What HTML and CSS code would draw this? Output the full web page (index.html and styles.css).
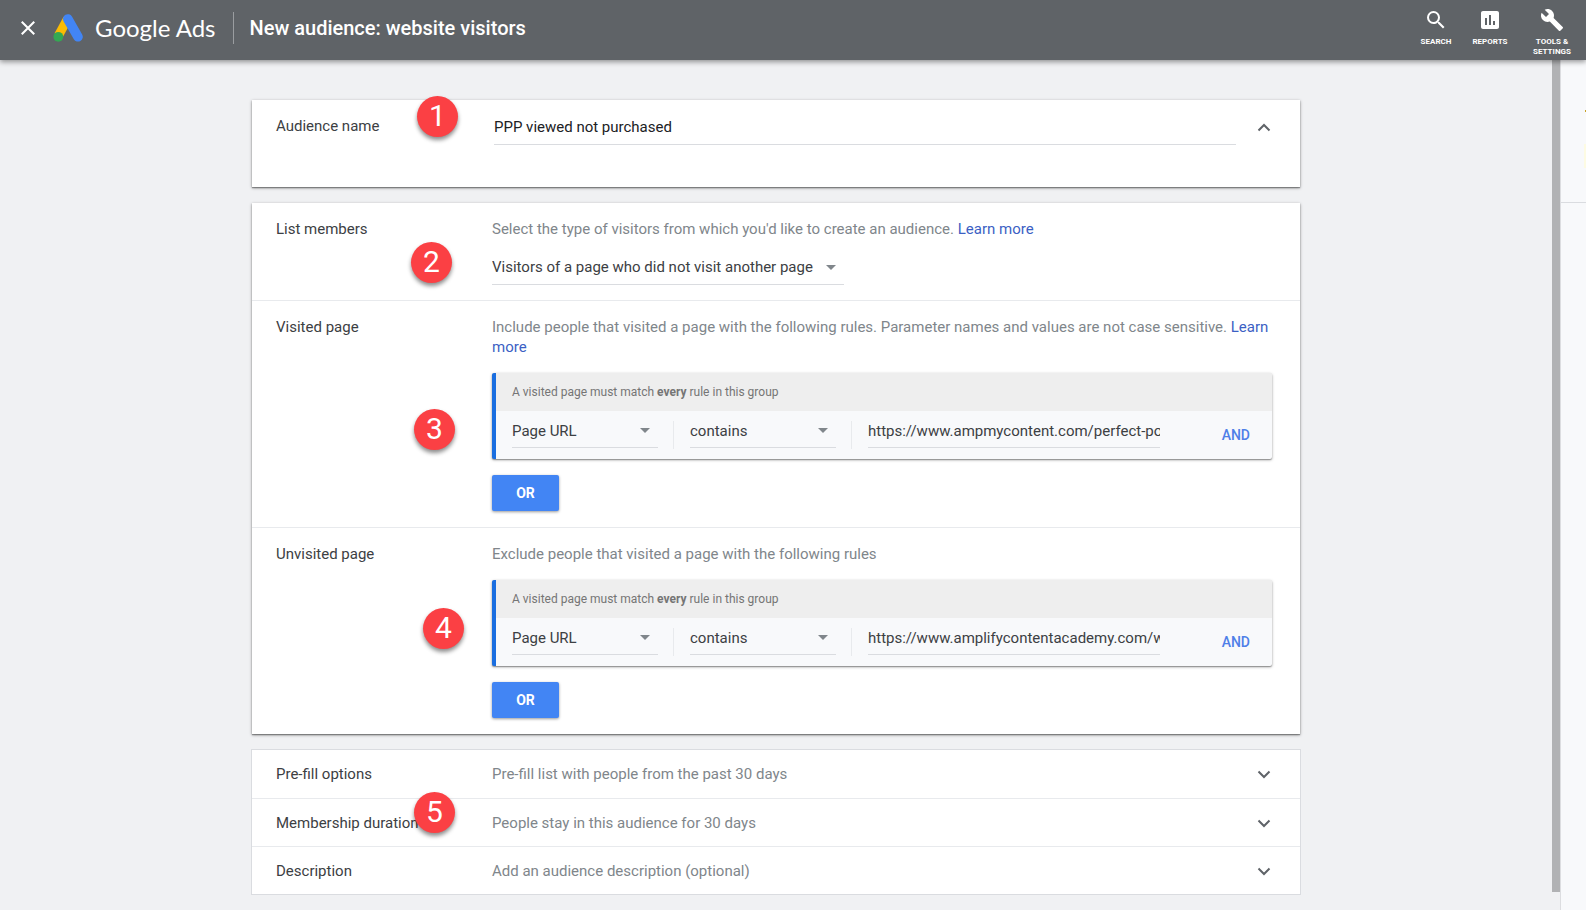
FILE: index.html
```html
<!DOCTYPE html>
<html lang="en">

<head>
    <meta charset="UTF-8">
    <meta name="viewport" content="width=device-width, initial-scale=1.0">
    <title>New audience: website visitors - Google Ads</title>
    <link rel="stylesheet" href="styles.css">
</head>

<body>

    <header class="topbar">
        <button class="close-button" aria-label="Close">
            <svg viewBox="0 0 24 24"><path d="M4.500 4.500L19.500 19.500M19.500 4.500L4.500 19.500" /></svg>
        </button>
        <svg class="logo" viewBox="0 0 30 28">
            <path d="M14.500 5L5.500 21.500" stroke="#fbbc04" stroke-width="9" />
            <path d="M14.800 5L25 22.800" stroke="#4285f4" stroke-width="9.600" stroke-linecap="round" />
            <circle cx="5.300" cy="22.800" r="4.900" fill="#34a853" />
        </svg>
        <span class="brand">Google Ads</span>
        <h1>New audience: website visitors</h1>

        <nav class="tools">
            <button class="tool">
                <svg viewBox="0 0 24 24"><path d="M15.500 14h-.79l-.28-.27A6.471 6.471 0 0 0 16 9.500 6.500 6.500 0 1 0 9.500 16c1.610 0 3.090-.59 4.230-1.570l.27.28v.79l5 4.990L20.490 19l-4.990-5zm-6 0C7.010 14 5 11.990 5 9.500S7.010 5 9.500 5 14 7.010 14 9.500 11.990 14 9.500 14z" /></svg>
                Search
            </button>
            <button class="tool">
                <svg viewBox="0 0 24 24"><path d="M19 3H5c-1.100 0-2 .9-2 2v14c0 1.100.9 2 2 2h14c1.100 0 2-.9 2-2V5c0-1.100-.9-2-2-2zM9 17H7v-7h2v7zm4 0h-2V7h2v10zm4 0h-2v-4h2v4z" /></svg>
                Reports
            </button>
            <button class="tool">
                <svg viewBox="0 0 24 24"><path d="M22.700 19l-9.100-9.100c.9-2.300.4-5-1.500-6.900-2-2-5-2.400-7.400-1.300L9 6 6 9 1.600 4.700C.4 7.100.9 10.100 2.900 12.100c1.900 1.900 4.600 2.400 6.900 1.500l9.100 9.100c.4.4 1 .4 1.400 0l2.300-2.300c.5-.4.5-1.100.1-1.400z" /></svg>
                Tools &amp; Settings
            </button>
        </nav>
    </header>

    <div class="layout">
        <main>
            <section class="card">
                <div class="row name-row">
                    <label for="audienceName">Audience name</label>
                    <div class="name-field">
                        <input type="text" id="audienceName" value="PPP viewed not purchased">
                        <button class="toggle" aria-label="Collapse">
                            <svg viewBox="0 0 24 24"><path d="M6.500 14.500L12 9L17.500 14.500" /></svg>
                        </button>
                    </div>
                    <span class="badge badge-1">1</span>
                </div>
            </section>

            <section class="card">
                <div class="row">
                    <label for="listMembers">List members</label>
                    <div class="content">
                        <p>Select the type of visitors from which you'd like to create an audience. <a href="#">Learn more</a></p>
                        <div class="select members-select">
                            <select id="listMembers">
                                <option>Visitors of a page who did not visit another page</option>
                            </select>
                        </div>
                    </div>
                    <span class="badge badge-2">2</span>
                </div>

                <div class="row">
                    <h2>Visited page</h2>
                    <div class="content">
                        <p>Include people that visited a page with the following rules. Parameter names and values are not case sensitive. <a href="#">Learn more</a></p>
                        <div class="rule-group">
                            <p class="rule-header">A visited page must match <b>every</b> rule in this group</p>
                            <div class="rule">
                                <div class="select">
                                    <select aria-label="Visited page parameter">
                                        <option>Page URL</option>
                                    </select>
                                </div>
                                <span class="separator"></span>
                                <div class="select">
                                    <select aria-label="Visited page condition">
                                        <option>contains</option>
                                    </select>
                                </div>
                                <span class="separator"></span>
                                <input type="text" aria-label="Visited page value" value="https://www.ampmycontent.com/perfect-post">
                                <button class="and-button">AND</button>
                            </div>
                        </div>
                        <button class="or-button">OR</button>
                    </div>
                    <span class="badge badge-3">3</span>
                </div>

                <div class="row">
                    <h2>Unvisited page</h2>
                    <div class="content">
                        <p>Exclude people that visited a page with the following rules</p>
                        <div class="rule-group">
                            <p class="rule-header">A visited page must match <b>every</b> rule in this group</p>
                            <div class="rule">
                                <div class="select">
                                    <select aria-label="Unvisited page parameter">
                                        <option>Page URL</option>
                                    </select>
                                </div>
                                <span class="separator"></span>
                                <div class="select">
                                    <select aria-label="Unvisited page condition">
                                        <option>contains</option>
                                    </select>
                                </div>
                                <span class="separator"></span>
                                <input type="text" aria-label="Unvisited page value" value="https://www.amplifycontentacademy.com/welcome">
                                <button class="and-button">AND</button>
                            </div>
                        </div>
                        <button class="or-button">OR</button>
                    </div>
                    <span class="badge badge-4">4</span>
                </div>
            </section>

            <section class="options">
                <div class="row">
                    <h2>Pre-fill options</h2>
                    <p>Pre-fill list with people from the past 30 days</p>
                    <button class="toggle" aria-label="Expand pre-fill options">
                        <svg viewBox="0 0 24 24"><path d="M6.500 9.500L12 15L17.500 9.500" /></svg>
                    </button>
                </div>
                <div class="row">
                    <h2>Membership duration</h2>
                    <p>People stay in this audience for 30 days</p>
                    <button class="toggle" aria-label="Expand membership duration">
                        <svg viewBox="0 0 24 24"><path d="M6.500 9.500L12 15L17.500 9.500" /></svg>
                    </button>
                    <span class="badge badge-5">5</span>
                </div>
                <div class="row">
                    <h2>Description</h2>
                    <p>Add an audience description (optional)</p>
                    <button class="toggle" aria-label="Expand description">
                        <svg viewBox="0 0 24 24"><path d="M6.500 9.500L12 15L17.500 9.500" /></svg>
                    </button>
                </div>
            </section>
        </main>

        <div class="scrollbar"></div>
        <aside class="side">
            <div class="side-top">
                <span class="side-mark"></span>
                <span class="side-glow"></span>
            </div>
        </aside>
    </div>

</body>

</html>
```

FILE: styles.css
```css
* {
    margin: 0;
    padding: 0;
    box-sizing: border-box;
}

body {
    display: flex;
    flex-direction: column;
    min-height: 100vh;
    font-family: Roboto, Arial, sans-serif;
    font-size: 15px;
    line-height: 20px;
    color: #3c4043;
    background-color: #f0f1f3;
}

button,
input,
select {
    font: inherit;
    color: inherit;
    border: none;
    background: none;
}

button {
    cursor: pointer;
}

a {
    color: #3c5fc4;
    text-decoration: none;
}

h2 {
    font-size: 15px;
    font-weight: 400;
}

/* Top bar */

.topbar {
    position: relative;
    display: flex;
    align-items: center;
    height: 60px;
    padding: 0 8px 4px 18px;
    color: #ffffff;
    background-color: #5f6367;
    box-shadow: 0 2px 5px rgba(0, 0, 0, 0.4);
}

.close-button,
.close-button svg {
    display: block;
    width: 20px;
    height: 20px;
}

.close-button path {
    stroke: #ffffff;
    stroke-width: 2.5;
}

.logo {
    width: 30px;
    height: 28px;
    margin-left: 15px;
    fill: none;
}

.brand {
    margin-left: 12px;
    padding-right: 17px;
    font-family: Lato, sans-serif;
    font-size: 24px;
    line-height: 32px;
    border-right: 1px solid #9a9da0;
}

h1 {
    margin-left: 16px;
    font-size: 20px;
    font-weight: 500;
}

.tools {
    display: flex;
    gap: 8px;
    height: 56px;
    margin-left: auto;
    padding-top: 8px;
}

.tool {
    display: flex;
    flex-direction: column;
    align-items: center;
    width: 46px;
    font-size: 8px;
    font-weight: 700;
    line-height: 10px;
    text-transform: uppercase;
}

.tool:last-child {
    width: 52px;
    margin-left: 5px;
}

.tool svg {
    flex: none;
    width: 24px;
    height: 24px;
    margin-bottom: 5px;
    fill: #ffffff;
}

/* Page */

.layout {
    flex: 1;
    display: flex;
}

main {
    flex: 1;
    padding: 40px 16px 16px;
}

.scrollbar {
    width: 8px;
    margin-bottom: 18px;
    background-color: #b1b2b4;
}

.side {
    width: 26px;
    border-left: 1px solid #dcdde0;
    background-color: #f8f9fb;
}

.side-top {
    display: flex;
    flex-direction: column;
    align-items: flex-end;
    gap: 32px;
    height: 143px;
    padding-top: 50px;
    border-bottom: 1px solid #dadce0;
}

/* Left edge of the chart behind the panel */
.side-mark {
    width: 1px;
    height: 2px;
    background-color: #c9a227;
}

.side-glow {
    width: 2px;
    height: 24px;
    background-color: #fdfbe3;
}

.card,
.options {
    max-width: 1048px;
    margin: 0 auto 16px;
    background-color: #ffffff;
}

.card {
    box-shadow: 0 1px 3px rgba(0, 0, 0, 0.4), 0 1px 1px rgba(0, 0, 0, 0.3);
}

.row {
    position: relative;
    display: grid;
    grid-template-columns: 216px 1fr;
    padding: 16px 28px 16px 24px;
}

.row + .row {
    border-top: 1px solid #e8eaed;
}

.content {
    display: flex;
    flex-direction: column;
    align-items: flex-start;
    gap: 16px;
    color: #80868b;
}

/* Audience name */

.name-row {
    padding: 16px 24px 42px;
}

.name-field {
    display: flex;
    align-items: flex-start;
    gap: 16px;
}

#audienceName {
    flex: 1;
    min-width: 0;
    height: 29px;
    margin-left: 2px;
    padding-bottom: 6px;
    color: #202124;
    border-bottom: 1px solid #dadce0;
}

.toggle,
.toggle svg {
    display: block;
    width: 24px;
    height: 24px;
}

.toggle path {
    fill: none;
    stroke: #5f6368;
    stroke-width: 2;
}

/* Selects */

.select {
    position: relative;
    width: 146px;
    color: #3c4043;
}

.select::after {
    content: "";
    position: absolute;
    top: 14px;
    right: 8px;
    border: 5px solid transparent;
    border-top-color: #80868b;
    border-bottom: none;
    pointer-events: none;
}

.select select {
    width: 100%;
    height: 34px;
    appearance: none;
    border-bottom: 1px solid #dadce0;
}

.members-select {
    width: 352px;
    margin: -4px 0 -1px;
}

.members-select select {
    padding-bottom: 2px;
}

/* Rules */

.rule-group {
    width: 100%;
    border-left: 4px solid #1a6ee0;
    border-radius: 2px;
    background-color: #f8f9fb;
    box-shadow: 0 1px 3px rgba(0, 0, 0, 0.35), 0 1px 1px rgba(0, 0, 0, 0.25);
}

.rule-header {
    padding: 9px 16px;
    font-size: 12px;
    color: #757575;
    background-color: #eeeeee;
}

.rule {
    display: flex;
    align-items: center;
    gap: 16px;
    height: 48px;
    padding: 0 22px 8px 16px;
    color: #3c4043;
}

.rule input {
    flex: 1;
    min-width: 0;
    height: 34px;
    border-bottom: 1px solid #dadce0;
}

.separator {
    width: 1px;
    height: 28px;
    margin: 8px 0 0 -1px;
    background-color: #e8eaed;
}

.and-button {
    margin: 8px 0 0 46px;
    font-size: 14px;
    font-weight: 500;
    color: #4f7fe8;
}

.or-button {
    width: 67px;
    height: 36px;
    font-size: 14px;
    font-weight: 700;
    color: #ffffff;
    background-color: #4285f4;
    border-radius: 2px;
    box-shadow: 0 1px 3px rgba(0, 0, 0, 0.4);
}

/* Collapsed options */

.options {
    margin-bottom: 0;
    box-shadow: 0 0 0 1px #dadce0;
}

.options .row {
    grid-template-columns: 216px 1fr 24px;
    align-items: center;
    height: 48px;
    padding: 0 24px;
}

.options p {
    color: #80868b;
}

/* Numbered steps drawn over the form */

.badge {
    position: absolute;
    width: 41px;
    height: 41px;
    font-size: 30px;
    line-height: 40px;
    text-align: center;
    color: #ffffff;
    background-color: #fb4044;
    border-radius: 50%;
    box-shadow: 0 3px 4px rgba(0, 0, 0, 0.45);
}

.badge-1 {
    top: -4px;
    left: 165px;
}

.badge-2 {
    top: 39px;
    left: 159px;
}

.badge-3 {
    top: 108px;
    left: 162px;
}

.badge-4 {
    top: 80px;
    left: 171px;
}

.badge-5 {
    top: -7px;
    left: 162px;
}
```
